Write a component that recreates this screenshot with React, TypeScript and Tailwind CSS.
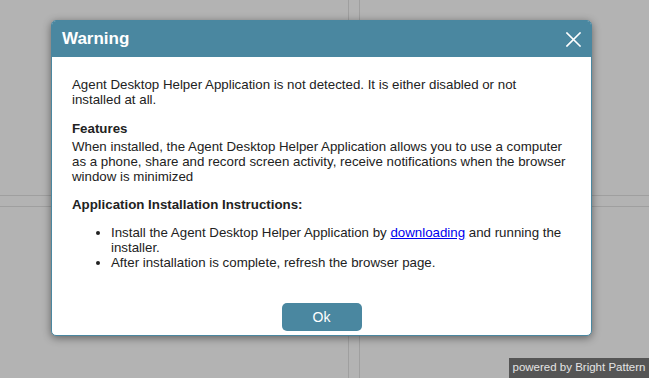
const FONT = { fontFamily: '"Liberation Sans", Arial, sans-serif' };

// background panes split by thin grey rules, like the agent desktop behind the dialog
function BackgroundPanes() {
  return (
    <div className="grid h-[378px] w-[649px] grid-cols-[349px_10px_1fr] grid-rows-[196px_10px_1fr] bg-[#b3b3b3]">
      <div className="border-b border-r border-[#9f9f9f]" />
      <div className="border-b border-[#9f9f9f]" />
      <div className="border-b border-l border-[#9f9f9f]" />
      <div className="border-r border-[#9f9f9f]" />
      <div />
      <div className="border-l border-[#9f9f9f]" />
      <div className="border-r border-t border-[#9f9f9f]" />
      <div className="border-t border-[#9f9f9f]" />
      <div className="border-l border-t border-[#9f9f9f]" />
    </div>
  );
}

function CloseIcon() {
  return (
    <svg width="15" height="15" viewBox="0 0 15 15" fill="none" stroke="white" strokeWidth="1.6" strokeLinecap="square">
      <path d="M1 1 L14 14 M14 1 L1 14" />
    </svg>
  );
}

export default function App() {
  return (
    <div className="relative h-[378px] w-[649px] overflow-hidden" style={FONT}>
      <BackgroundPanes />

      {/* Warning dialog */}
      <div className="absolute left-[51px] top-[20px] w-[541px] overflow-hidden rounded-[5px] border border-[#4a87a0] bg-white shadow-[0_2px_8px_rgba(0,0,0,0.45)]">
        <div className="flex h-[36px] items-center justify-between bg-[#4a87a0] pl-[10px] pr-[10px]">
          <h2 className="text-[17px] font-bold text-white">Warning</h2>
          <CloseIcon />
        </div>

        <div className="px-[20px] pt-[20px] pb-[4px] text-[13.3px] leading-[15px] text-[#222]">
          <p>
            Agent Desktop Helper Application is not detected. It is either disabled or not
            <br />
            installed at all.
          </p>

          <p className="mt-[14px] mb-[3px] font-bold">Features</p>
          <p>
            When installed, the Agent Desktop Helper Application allows you to use a computer
            <br />
            as a phone, share and record screen activity, receive notifications when the browser
            <br />
            window is minimized
          </p>

          <p className="mt-[13px] font-bold">Application Installation Instructions:</p>
          <ul className="mt-[13px] list-disc pl-[39px]">
            <li>
              Install the Agent Desktop Helper Application by{' '}
              <a href="#" className="text-[#0000ee] underline">downloading</a> and running the
              <br />
              installer.
            </li>
            <li>After installation is complete, refresh the browser page.</li>
          </ul>

          <div className="mt-[33px] flex justify-center">
            <button className="h-[28px] w-[80px] rounded-[5px] bg-[#4a87a0] text-[14px] text-white">
              Ok
            </button>
          </div>
        </div>
      </div>

      <div className="absolute bottom-0 right-0 flex h-[20px] w-[140px] items-center justify-center bg-[#555555] text-[11.5px] text-[#e4e4e4]">
        powered by Bright Pattern
      </div>
    </div>
  );
}
